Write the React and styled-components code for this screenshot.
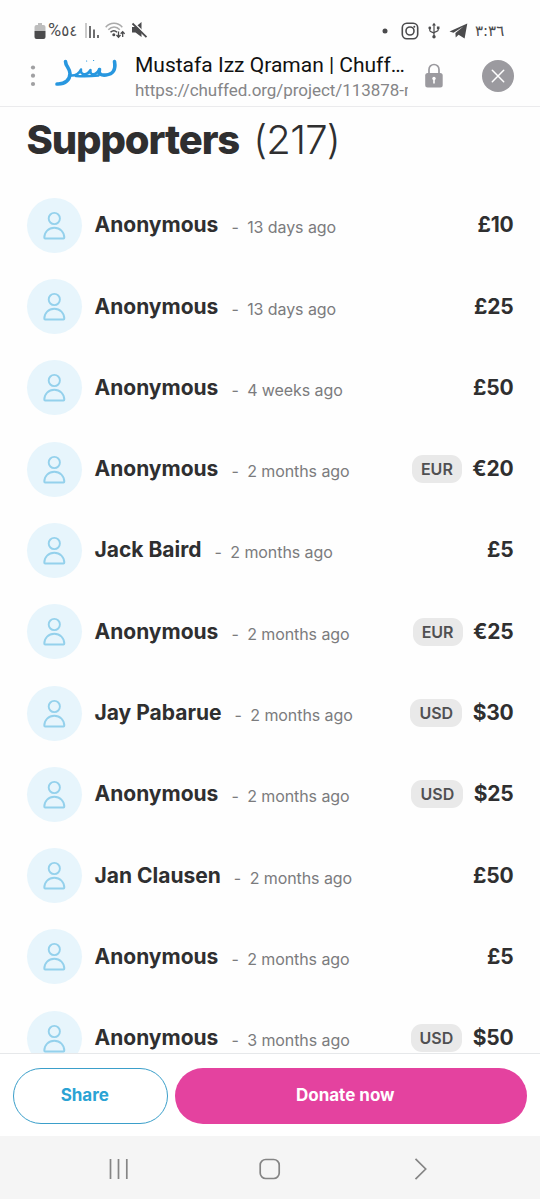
import React from 'react';
import styled, { createGlobalStyle } from 'styled-components';

const colors = {
  dark: '#2f2f30',
  grey: '#7b7b7d',
  icon: '#4b4b4d',
  line: '#ebebed',
  blue: '#2ba3d4',
  pink: '#e4429f',
};

const GlobalStyle = createGlobalStyle`
  * {
    box-sizing: border-box;
  }
  body {
    margin: 0;
    background: #fefefe;
    color: ${colors.dark};
    font-family: Inter, sans-serif;
  }
`;

const StyledPage = styled.div`
  width: 540px;
  height: 1199px;
  display: flex;
  flex-direction: column;
  overflow: hidden;
`;

const StyledStatusBar = styled.div`
  height: 49px;
  padding: 12px 35px 0 34px;
  display: flex;
  align-items: center;
  justify-content: space-between;
  flex: none;
  color: ${colors.icon};
`;

const StyledStatusGroup = styled.div`
  display: flex;
  align-items: center;

  svg {
    display: block;
    flex: none;
    margin-right: ${({ $gap }) => $gap}px;
  }
`;

const StyledBatteryIcon = styled.svg`
  && {
    margin-right: 2px;
  }
`;

const StyledDotIcon = styled.svg`
  && {
    margin-right: 13px;
  }
`;

const StyledTelegramIcon = styled.svg`
  && {
    margin-right: 7px;
  }
`;

const StyledStatusText = styled.span`
  width: ${({ $width }) => $width}px;
  margin-right: ${({ $after }) => $after || 0}px;
  font: ${({ $size }) => $size}px/20px 'DejaVu Sans', sans-serif;
  letter-spacing: ${({ $spacing }) => $spacing || 0}px;
  white-space: nowrap;
`;

const StyledPercent = styled.span`
  font: 18px/20px Roboto, sans-serif;
  letter-spacing: -0.5px;
`;

const StyledBrowserBar = styled.div`
  height: 58px;
  padding: 0 26px 0 28px;
  display: flex;
  border-bottom: 1px solid ${colors.line};
  flex: none;

  svg {
    display: block;
    flex: none;
  }
`;

const StyledMenu = styled.div`
  width: 10px;
  padding-top: 16px;
`;

const StyledLogo = styled.div`
  width: 70px;
  margin: 7px 0 0 15px;
`;

const StyledAddress = styled.div`
  width: 273px;
  margin-left: 12px;
  font-family: Roboto, sans-serif;
  white-space: nowrap;
`;

const StyledPageTitle = styled.div`
  margin-top: 3px;
  color: #111;
  font-size: 21px;
  line-height: 26px;
`;

const StyledUrl = styled.div`
  color: #858587;
  font-size: 17px;
  line-height: 24px;
  letter-spacing: -0.05px;
  overflow: hidden;
`;

const StyledLock = styled.div`
  margin: 14px 0 0 16px;
`;

const StyledClose = styled.div`
  width: 32px;
  height: 32px;
  margin: 11px 0 0 auto;
  border-radius: 50%;
  background: #9b9a9f;
`;

const StyledMain = styled.main`
  flex: 1;
  min-height: 0;
  padding: 9px 26.5px 0;
  overflow: hidden;
`;

const StyledHeading = styled.h1`
  height: 48px;
  margin: 0 0 33.8px;
  font-size: 40px;
  line-height: 48px;
  font-weight: 800;
  letter-spacing: -1.12px;
  white-space: nowrap;
`;

const StyledCount = styled.span`
  margin-left: 14px;
  font-weight: 350;
  letter-spacing: -0.75px;
`;

const StyledSupporter = styled.div`
  height: 55px;
  margin-bottom: 26.3px;
  display: flex;
  align-items: center;
  white-space: nowrap;
`;

const StyledAvatar = styled.div`
  width: 55px;
  height: 55px;
  border-radius: 50%;
  background: #e7f5fc;
  flex: none;
`;

const StyledName = styled.div`
  margin-left: 13px;
  font-size: 21px;
  line-height: 28px;
  font-weight: 700;
`;

const StyledTime = styled.div`
  margin: 4px 0 0 13px;
  color: ${colors.grey};
  font-size: 16px;
  line-height: 20px;
  letter-spacing: -0.08px;

  span {
    margin-right: 8.5px;
  }
`;

const StyledCurrency = styled.div`
  height: 28px;
  margin-left: auto;
  padding: 0 9px;
  border-radius: 11px;
  background: #e9e9e9;
  color: #505052;
  font-size: 16px;
  line-height: 28px;
  font-weight: 600;
`;

const StyledAmount = styled.div`
  margin-left: ${({ $hasCurrency }) => ($hasCurrency ? '10.5px' : 'auto')};
  font-size: 21px;
  line-height: 28px;
  font-weight: 700;
  letter-spacing: -0.2px;
`;

const StyledActions = styled.div`
  height: 83px;
  padding: 13.5px 13px 0;
  border-top: 1px solid #e6e8ea;
  background: #fff;
  display: flex;
  gap: 6.5px;
  flex: none;
`;

const StyledButton = styled.button`
  width: ${({ $primary }) => ($primary ? '352.5px' : '155px')};
  height: 56px;
  padding: 0 ${({ $primary }) => ($primary ? 11 : 11.5)}px 2px 0;
  border: ${({ $primary }) => ($primary ? 'none' : '1.5px solid #3b9fca')};
  border-radius: 28px;
  background: ${({ $primary }) => ($primary ? colors.pink : '#fff')};
  color: ${({ $primary }) => ($primary ? '#fff' : colors.blue)};
  font: 700 17px Inter, sans-serif;
`;

const StyledNavigation = styled.nav`
  height: 63px;
  padding-top: 2px;
  background: #f5f5f5;
  display: flex;
  align-items: center;
  justify-content: center;
  gap: 125px;
  flex: none;
`;

const supporters = [
  { id: 1, name: 'Anonymous', time: '13 days ago', amount: '£10' },
  { id: 2, name: 'Anonymous', time: '13 days ago', amount: '£25' },
  { id: 3, name: 'Anonymous', time: '4 weeks ago', amount: '£50' },
  { id: 4, name: 'Anonymous', time: '2 months ago', amount: '€20', currency: 'EUR' },
  { id: 5, name: 'Jack Baird', time: '2 months ago', amount: '£5' },
  { id: 6, name: 'Anonymous', time: '2 months ago', amount: '€25', currency: 'EUR' },
  { id: 7, name: 'Jay Pabarue', time: '2 months ago', amount: '$30', currency: 'USD' },
  { id: 8, name: 'Anonymous', time: '2 months ago', amount: '$25', currency: 'USD' },
  { id: 9, name: 'Jan Clausen', time: '2 months ago', amount: '£50' },
  { id: 10, name: 'Anonymous', time: '2 months ago', amount: '£5' },
  { id: 11, name: 'Anonymous', time: '3 months ago', amount: '$50', currency: 'USD' },
];

const StatusBar = () => (
  <StyledStatusBar>
    <StyledStatusGroup $gap={6}>
      <StyledBatteryIcon width="12" height="18" viewBox="0 0 12 18">
        <path d="M4 1h4v2h1.5a2 2 0 0 1 2 2v4H.5V5a2 2 0 0 1 2-2H4z" fill="#bdbdbd" />
        <path d="M.5 9h11v6a2 2 0 0 1-2 2h-7a2 2 0 0 1-2-2z" fill={colors.icon} />
      </StyledBatteryIcon>
      <StyledStatusText $width={29} $after={8} $size={15}>
        <StyledPercent>%</StyledPercent>٥٤
      </StyledStatusText>
      <svg width="14" height="16" viewBox="0 0 14 16" strokeWidth="1.6">
        <path d="M1 0v15" stroke="#bdbdbd" />
        <path d="M5 3v12M9 6.500v8.500M13 12v3" stroke={colors.icon} />
      </svg>
      <svg width="20" height="17" viewBox="0 0 20 17" fill="none" strokeWidth="1.5">
        <path d="M.7 5.2C5.300 0 12.700 0 17.300 5.200M3.300 7.800c3.500-3.800 8.200-3.800 11.500 0" stroke="#aaa" />
        <path d="M5.500 10.300c2.200-2.200 4.500-2.200 6.500 0" stroke={colors.icon} />
        <circle cx="8.800" cy="12.800" r="1.500" fill={colors.icon} />
        <path d="M13.500 9.500v5.500M11.500 13l2 2.200 2-2.200M17.700 15V9.700M15.700 11.800l2-2.200 2 2.200" stroke={colors.icon} strokeWidth="1.300" />
      </svg>
      <svg width="17" height="17" viewBox="0 0 17 17">
        <path d="M1 5h3.500l6-5v15l-6-4.500H1z" fill={colors.icon} />
        <path d="M2.500 .5l14 13.700" stroke="#fefefe" strokeWidth="1.600" />
        <path d="M1.500 1.500l14 13.700" stroke={colors.icon} strokeWidth="1.800" />
      </svg>
    </StyledStatusGroup>
    <StyledStatusGroup $gap={9}>
      <StyledDotIcon width="6" height="6" viewBox="0 0 6 6">
        <circle cx="3" cy="3" r="2.500" fill={colors.icon} />
      </StyledDotIcon>
      <svg width="18" height="18" viewBox="0 0 18 18" fill="none" stroke={colors.icon} strokeWidth="1.600">
        <rect x="1.300" y="1.300" width="15.400" height="15.400" rx="4.500" />
        <circle cx="9" cy="9" r="4" />
        <circle cx="13.300" cy="4.700" r="1" fill={colors.icon} stroke="none" />
      </svg>
      <svg width="12" height="17" viewBox="0 0 12 17" fill="none" stroke={colors.icon} strokeWidth="1.200">
        <path d="M6 2v12.500M1.800 6v2.500c0 1.800 4.200 1.500 4.200 3.200M10.200 6v2c0 1.800-4.200 1.500-4.200 3.200" />
        <path d="M4 3.500L6 .8l2 2.700z" fill={colors.icon} stroke="none" />
        <circle cx="6" cy="14.700" r="1.700" fill={colors.icon} stroke="none" />
        <circle cx="1.800" cy="6" r="1.400" fill={colors.icon} stroke="none" />
        <path d="M8.900 4.500h2.600v2.600H8.900z" fill={colors.icon} stroke="none" />
      </svg>
      <StyledTelegramIcon width="19" height="16" viewBox="0 0 19 16" fill={colors.icon}>
        <path d="M.5 8.400L18.300.6 15.600 15.400 9.600 11.700l-2.900 2.800-.3-4.600 8-6.400-9.900 6.200z" />
      </StyledTelegramIcon>
      <StyledStatusText $width={30} $size={15} $spacing={-0.2}>٣:٣٦</StyledStatusText>
    </StyledStatusGroup>
  </StyledStatusBar>
);

const BrowserBar = () => (
  <StyledBrowserBar>
    <StyledMenu>
      <svg width="10" height="22" viewBox="0 0 10 22" fill="#a0a0a2">
        <circle cx="5" cy="2.500" r="2.100" />
        <circle cx="5" cy="10.700" r="2.100" />
        <circle cx="5" cy="19" r="2.100" />
      </svg>
    </StyledMenu>
    <StyledLogo>
      <svg width="70" height="34" viewBox="0 0 70 34" fill="none" stroke="#2897df" strokeLinecap="round" strokeLinejoin="round">
        <path d="M12.500 5.500c0 4.500 4.500 7 4.500 12 0 6-4.500 11-13 10.500" strokeWidth="3.600" />
        <path d="M17 19.500c5 .5 9-1.500 11-6-1 6 6 6.500 9.500.5-1 5.500 5 6 9-.5" strokeWidth="2.500" />
        <path d="M23 20c8 .5 16 .2 22.500-.5" strokeWidth="2.500" />
        <path d="M46.500 13.500c-1.500 5 2 6 6.500 5.500 7-.8 10-5 8.500-13.500" strokeWidth="3.600" />
        <path d="M33.500 5h.2M40.500 4.500h.2" strokeWidth="1.100" />
      </svg>
    </StyledLogo>
    <StyledAddress>
      <StyledPageTitle>Mustafa Izz Qraman | Chuff…</StyledPageTitle>
      <StyledUrl>https://chuffed.org/project/113878-m</StyledUrl>
    </StyledAddress>
    <StyledLock>
      <svg width="20" height="26" viewBox="0 0 20 26">
        <path d="M5 12V6.500a5 5 0 0 1 10 0V12" fill="none" stroke="#9b9a9f" strokeWidth="1.700" />
        <rect x="1.200" y="10" width="17.500" height="14.500" rx="2.500" fill="#9b9a9f" />
        <path d="M10 16v4.500" stroke="#fff" strokeWidth="1.600" />
        <circle cx="10" cy="15.500" r="1.700" fill="#fff" />
      </svg>
    </StyledLock>
    <StyledClose>
      <svg width="32" height="32" viewBox="0 0 32 32" stroke="#fff" strokeWidth="1.500" strokeLinecap="round">
        <path d="M10.300 10.300l11.400 11.400M21.700 10.300L10.300 21.700" />
      </svg>
    </StyledClose>
  </StyledBrowserBar>
);

const Supporter = ({ supporter }) => (
  <StyledSupporter>
    <StyledAvatar>
      <svg width="55" height="55" viewBox="0 0 55 55" fill="none" stroke="#94d1ec" strokeWidth="1.900">
        <circle cx="27.300" cy="20.500" r="5.600" />
        <path d="M18.100 40.500h18.400c.5 0 .8-.3.800-.8 0-5.600-4.200-10-10-10s-10 4.400-10 10c0 .5.300.8.800.8z" />
      </svg>
    </StyledAvatar>
    <StyledName>{supporter.name}</StyledName>
    <StyledTime>
      <span>-</span>
      {supporter.time}
    </StyledTime>
    {supporter.currency && <StyledCurrency>{supporter.currency}</StyledCurrency>}
    <StyledAmount $hasCurrency={!!supporter.currency}>{supporter.amount}</StyledAmount>
  </StyledSupporter>
);

const Navigation = () => (
  <StyledNavigation>
    <svg width="26" height="26" viewBox="0 0 26 26" stroke="#858585" strokeWidth="1.700">
      <path d="M4.500 3v20M12.500 3v20M20.800 3v20" />
    </svg>
    <svg width="26" height="26" viewBox="0 0 26 26" fill="none" stroke="#858585" strokeWidth="1.700">
      <rect x="3.200" y="3.500" width="19" height="19" rx="5.500" />
    </svg>
    <svg width="26" height="26" viewBox="0 0 26 26" fill="none" stroke="#858585" strokeWidth="1.700">
      <path d="M7.500 2.800L17.700 13 7.500 23.200" />
    </svg>
  </StyledNavigation>
);

const App = () => (
  <StyledPage>
    <GlobalStyle />
    <StatusBar />
    <BrowserBar />
    <StyledMain>
      <StyledHeading>
        Supporters
        <StyledCount>(217)</StyledCount>
      </StyledHeading>
      {supporters.map(supporter => (
        <Supporter key={supporter.id} supporter={supporter} />
      ))}
    </StyledMain>
    <StyledActions>
      <StyledButton>Share</StyledButton>
      <StyledButton $primary>Donate now</StyledButton>
    </StyledActions>
    <Navigation />
  </StyledPage>
);

export default App;
